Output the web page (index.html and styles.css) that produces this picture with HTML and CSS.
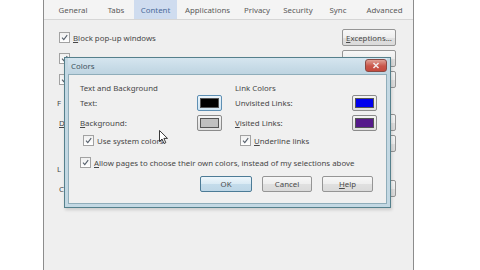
FILE: index.html
```html
<!DOCTYPE html>
<html>
<head>
  <title>Options - Content</title>
  <link rel="stylesheet" href="styles.css">
</head>
<body>
  <div class="options">
    <div class="tabs">
      <div class="tab tab-general">General</div>
      <div class="tab tab-tabs">Tabs</div>
      <div class="tab tab-content active">Content</div>
      <div class="tab tab-apps">Applications</div>
      <div class="tab tab-privacy">Privacy</div>
      <div class="tab tab-security">Security</div>
      <div class="tab tab-sync">Sync</div>
      <div class="tab tab-advanced">Advanced</div>
    </div>

    <!-- Content tab behind the modal; only the edges that peek out are drawn -->
    <div class="opt-body">
      <div class="opt-row">
        <div class="check"><span class="box"><svg viewBox="0 0 10 10"><path d="M2.2 5.2 L4.2 7.4 L8 2.4" /></svg></span><span class="mn">Block pop-up windows</span></div>
        <div class="btn"><span class="mn">Exceptions...</span></div>
      </div>
      <div class="opt-row">
        <div class="check"><span class="box"><svg viewBox="0 0 10 10"><path d="M2.2 5.2 L4.2 7.4 L8 2.4" /></svg></span></div>
        <div class="btn"></div>
      </div>
      <div class="opt-row">
        <div class="check"><span class="box"><svg viewBox="0 0 10 10"><path d="M2.2 5.2 L4.2 7.4 L8 2.4" /></svg></span></div>
        <div class="btn"></div>
      </div>
      <div class="opt-heading">F</div>
      <div class="opt-row">
        <div class="plain mn">D</div>
        <div class="btn"></div>
      </div>
      <div class="opt-row">
        <div class="plain"></div>
        <div class="btn"></div>
      </div>
      <div class="opt-heading lang">L</div>
      <div class="opt-row">
        <div class="plain">C</div>
        <div class="btn"></div>
      </div>
    </div>

    <div class="dialog">
      <div class="titlebar">
        <span class="title">Colors</span>
        <div class="close"><svg viewBox="0 0 22 13"><path d="M8 3.5 L14 9.5 M14 3.5 L8 9.5" /></svg></div>
      </div>
      <div class="dlg-body">
        <div class="cols">
          <div class="col">
            <div class="group-title">Text and Background</div>
            <div class="color-row">
              <span>Text:</span>
              <div class="swatch focused"><span class="chip" style="background: #000000;"></span></div>
            </div>
            <div class="color-row">
              <span class="mn">Background:</span>
              <div class="swatch"><span class="chip" style="background: #c0c0c0;"></span></div>
            </div>
            <div class="check sub left-sub"><span class="box"><svg viewBox="0 0 10 10"><path d="M2.2 5.2 L4.2 7.4 L8 2.4" /></svg></span><span>Use system colors</span></div>
          </div>
          <div class="col">
            <div class="group-title">Link Colors</div>
            <div class="color-row">
              <span>Unvisited Links:</span>
              <div class="swatch"><span class="chip" style="background: #0000ee;"></span></div>
            </div>
            <div class="color-row">
              <span class="mn">Visited Links:</span>
              <div class="swatch"><span class="chip" style="background: #551a8b;"></span></div>
            </div>
            <div class="check sub right-sub"><span class="box"><svg viewBox="0 0 10 10"><path d="M2.2 5.2 L4.2 7.4 L8 2.4" /></svg></span><span class="mn">Underline links</span></div>
          </div>
        </div>
        <div class="check allow"><span class="box"><svg viewBox="0 0 10 10"><path d="M2.2 5.2 L4.2 7.4 L8 2.4" /></svg></span><span class="mn">Allow pages to choose their own colors, instead of my selections above</span></div>
        <div class="actions">
          <div class="btn dlg-btn default">OK</div>
          <div class="btn dlg-btn cancel">Cancel</div>
          <div class="btn dlg-btn help"><span class="mn">Help</span></div>
        </div>
      </div>
    </div>

    <svg class="cursor" viewBox="0 0 10 15"><path d="M0.5 0.5 L0.5 11.5 L3 9 L5 13.5 L6.8 12.7 L4.9 8.4 L8.5 8.4 Z" /></svg>
  </div>
</body>
</html>
```

FILE: styles.css
```css
body {
  margin: 0;
  background: #ffffff;
  font-family: "Noto Sans", "Open Sans", sans-serif;
  font-size: 7.85px;
  color: #474747;
  overflow: hidden;
}

/* access-key underline on the first letter */
.mn::first-letter {
  text-decoration: underline;
}

.options {
  position: relative;
  margin-left: 43px;
  width: 369px;
  height: 270px;
  border-left: 1px solid #8c8c8c;
  border-right: 1px solid #8c8c8c;
  background: #efefef;
}

.tabs {
  display: flex;
  height: 19px;
  border-bottom: 1px solid #d6d6d6;
  background: #f4f4f4;
}

.tab {
  display: flex;
  align-items: flex-end;
  justify-content: center;
  padding-bottom: 4px;
  box-sizing: border-box;
  color: #5a5a5a;
}

.tab-general { width: 58px; }
.tab-tabs { width: 28px; margin-right: 4px; }
.tab-content { width: 43px; }
.tab-apps { width: 61px; }
.tab-privacy { width: 38px; }
.tab-security { width: 44px; }
.tab-sync { width: 36px; }
.tab-advanced { width: 57px; }

.tab.active {
  background: #cfdcef;
  color: #4a6a9a;
}

.opt-body {
  padding: 7px 17px 0 15px;
}

.opt-row {
  display: flex;
  align-items: center;
  justify-content: space-between;
  height: 21px;
}

.opt-heading {
  margin: 8px 0 4px -2px;
  height: 10px;
}

.opt-heading.lang {
  margin-top: 10px;
}

.check {
  display: flex;
  align-items: center;
  gap: 3px;
}

.box {
  display: inline-block;
  width: 9px;
  height: 9px;
  border: 1px solid #a2a2a2;
  background: linear-gradient(#f0f0f0, #ffffff);
  box-sizing: content-box;
}

.box svg {
  display: block;
  width: 9px;
  height: 9px;
}

.box path {
  fill: none;
  stroke: #56606c;
  stroke-width: 1.2;
}

.btn {
  display: flex;
  align-items: center;
  justify-content: center;
  width: 54px;
  height: 17px;
  box-sizing: border-box;
  border: 1px solid #959595;
  border-radius: 2px;
  background: linear-gradient(#f7f7f7 0%, #eeeeee 50%, #e0e0e0 51%, #dadada 100%);
  color: #4a4a4a;
}

.dialog {
  position: absolute;
  left: 20px;
  top: 57px;
  width: 327px;
  height: 151px;
  box-sizing: border-box;
  border: 1px solid #55808c;
  background: #c3d8e3;
  padding: 0 3px 3px 3px;
  display: flex;
  flex-direction: column;
  box-shadow: 1px 2px 3px rgba(0, 0, 0, 0.15);
}

.titlebar {
  display: flex;
  align-items: center;
  justify-content: space-between;
  height: 16px;
  padding-left: 3px;
  background: linear-gradient(#d5e5ef, #bed4e1);
}

.title {
  color: #3f5360;
}

.close {
  width: 22px;
  height: 13px;
  border: 1px solid #8a4a44;
  border-radius: 3px;
  box-sizing: border-box;
  background: linear-gradient(#e0a196, #c9564a 55%, #c44b3f);
  margin-top: -1px;
}

.close svg {
  display: block;
  width: 20px;
  height: 11px;
}

.close path {
  stroke: #f4eaea;
  stroke-width: 1.8;
  fill: none;
}

.dlg-body {
  flex: 1;
  border: 1px solid #8fadba;
  background: #f0f0f0;
  padding: 8px 12px 0 11px;
}

.cols {
  display: grid;
  grid-template-columns: 142px 142px;
  column-gap: 13px;
}

.group-title {
  height: 11px;
  line-height: 11px;
  margin-bottom: 1px;
}

.color-row {
  display: flex;
  align-items: center;
  justify-content: space-between;
  height: 16px;
  margin-bottom: 4px;
}

.swatch {
  display: flex;
  align-items: center;
  justify-content: center;
  width: 25px;
  height: 16px;
  box-sizing: border-box;
  border: 1px solid #8b8b8b;
  border-radius: 2px;
  background: linear-gradient(#f4f4f4, #dedede);
}

.swatch.focused {
  border-color: #5e8fb3;
  background: linear-gradient(#eaf4fb, #cfe4f2);
}

.chip {
  display: block;
  width: 17px;
  height: 8px;
  border: 1px solid #555;
}

.check.sub {
  margin-top: 4px;
  height: 11px;
}

.left-sub {
  padding-left: 3px;
}

.right-sub {
  padding-left: 5px;
}

.allow {
  margin-top: 11px;
  height: 11px;
}

.actions {
  display: flex;
  justify-content: flex-end;
  gap: 10px;
  margin-top: 8px;
  padding-right: 1px;
}

.dlg-btn {
  height: 16px;
}

.dlg-btn.default {
  width: 52px;
  border-color: #4c7b96;
  background: linear-gradient(#eef6fb, #d9eaf4 50%, #c4dceb 51%, #bdd6e6);
}

.dlg-btn.cancel {
  width: 50px;
}

.dlg-btn.help {
  width: 51px;
}

.cursor {
  position: absolute;
  left: 115px;
  top: 130px;
  width: 10px;
  height: 15px;
}

.cursor path {
  fill: #ffffff;
  stroke: #222;
  stroke-width: 0.9;
}
```
